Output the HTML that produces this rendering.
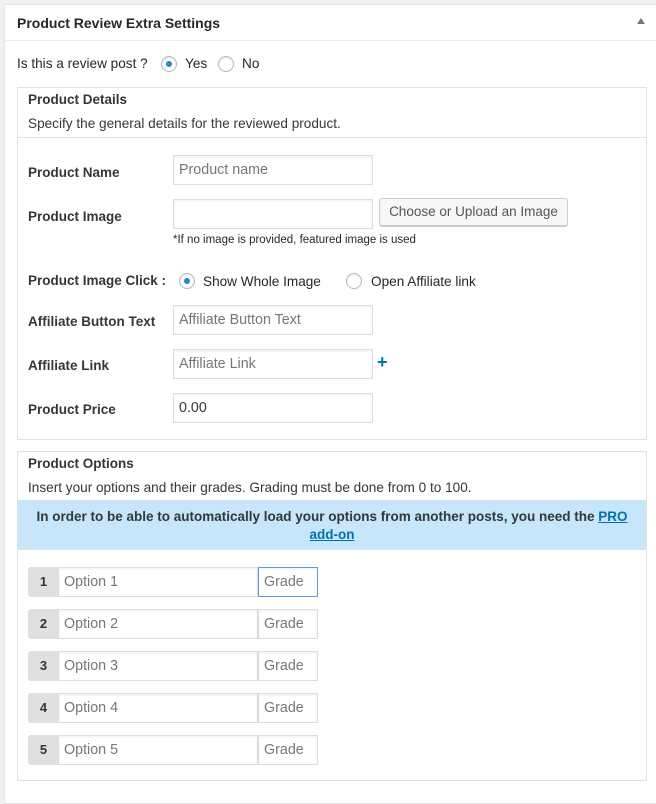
<!DOCTYPE html>
<html><head><meta charset="utf-8"><style>
*{box-sizing:border-box;margin:0;padding:0}
body{width:656px;height:788px;background:#f1f1f1;font-family:"Liberation Sans",sans-serif;color:#23282d;position:relative;overflow:hidden;font-size:13.6px}
.a{position:absolute;white-space:nowrap}
.outer{position:absolute;left:4px;top:4px;width:660px;height:800px;background:#fff;border:1px solid #e5e5e5}
.box{position:absolute;left:17px;width:630px;border:1px solid #e1e1e1;background:#fff}
.lbl{position:absolute;left:28px;font-weight:bold;font-size:13.5px;color:#32373c}
.in{position:absolute;border:1px solid #ddd;box-shadow:inset 0 1px 2px rgba(0,0,0,.07);background:#fff;color:#72777c;font-size:14.3px;padding-left:5px;line-height:28px;height:30px}
.radio{position:absolute;width:16px;height:16px;border-radius:50%;border:1px solid #b4b9be;background:#fff;box-shadow:inset 0 1px 2px rgba(0,0,0,.1)}
.radio.on::after{content:"";position:absolute;left:4px;top:4px;width:6px;height:6px;border-radius:50%;background:#1e8cbe}
.num{position:absolute;left:28px;width:31px;height:30px;background:#e0e0e0;border-radius:3px 0 0 3px;font-weight:bold;font-size:13px;line-height:30px;text-align:center;color:#333}
</style></head><body>
<div class="outer"></div>
<div class="a" style="left:4px;top:40px;width:652px;height:1px;background:#eee"></div>
<div class="a" style="left:17px;top:14px;font-weight:bold;font-size:14px;line-height:18px">Product Review Extra Settings</div>
<div class="a" style="left:637px;top:18px;width:0;height:0;border-left:4px solid transparent;border-right:4px solid transparent;border-bottom:6px solid #72777c"></div>

<div class="a" style="left:17px;top:56px;line-height:16px">Is this a review post ?</div>
<div class="radio on" style="left:161px;top:56px"></div>
<div class="a" style="left:185px;top:56px;line-height:16px">Yes</div>
<div class="radio" style="left:218px;top:56px"></div>
<div class="a" style="left:242px;top:56px;line-height:16px">No</div>

<div class="box" style="top:87px;height:353px"></div>
<div class="a" style="left:17px;top:137px;width:630px;height:1px;background:#e1e1e1"></div>
<div class="a" style="left:28px;top:92px;font-weight:bold;font-size:13.5px;line-height:16px;color:#32373c">Product Details</div>
<div class="a" style="left:28px;top:116px;line-height:16px;color:#32373c">Specify the general details for the reviewed product.</div>

<div class="lbl" style="top:165px">Product Name</div>
<div class="in" style="left:173px;top:155px;width:200px">Product name</div>
<div class="lbl" style="top:209px">Product Image</div>
<div class="in" style="left:173px;top:199px;width:200px"></div>
<div class="a" style="left:379px;top:198px;width:189px;height:28px;border:1px solid #ccc;border-radius:3px;background:#f7f7f7;box-shadow:0 1px 0 #ccc;font-size:13.5px;line-height:26px;text-align:center;color:#555">Choose or Upload an Image</div>
<div class="a" style="left:173px;top:234px;font-size:11.5px;line-height:13px;color:#23282d">*If no image is provided, featured image is used</div>

<div class="lbl" style="top:273px">Product Image Click :</div>
<div class="radio on" style="left:179px;top:273px"></div>
<div class="a" style="left:203px;top:274px;line-height:16px">Show Whole Image</div>
<div class="radio" style="left:346px;top:273px"></div>
<div class="a" style="left:371px;top:274px;line-height:16px">Open Affiliate link</div>

<div class="lbl" style="top:314px">Affiliate Button Text</div>
<div class="in" style="left:173px;top:305px;width:200px">Affiliate Button Text</div>
<div class="lbl" style="top:358px">Affiliate Link</div>
<div class="in" style="left:173px;top:349px;width:200px">Affiliate Link</div>
<div class="a" style="left:377px;top:352px;font-weight:bold;font-size:18px;line-height:20px;color:#0073aa">+</div>
<div class="lbl" style="top:402px">Product Price</div>
<div class="in" style="left:173px;top:393px;width:200px;color:#32373c">0.00</div>

<div class="box" style="top:451px;height:330px"></div>
<div class="a" style="left:28px;top:456px;font-weight:bold;font-size:13.5px;line-height:16px;color:#32373c">Product Options</div>
<div class="a" style="left:28px;top:480px;line-height:16px;color:#32373c">Insert your options and their grades. Grading must be done from 0 to 100.</div>
<div class="a" style="left:18px;top:500px;width:628px;height:50px;background:#c7e5fb;border-bottom:1px solid #e1e1e1;text-align:center;font-weight:bold;font-size:13.5px;line-height:18px;padding-top:8px;color:#32373c;white-space:normal">In order to be able to automatically load your options from another posts, you need the <span style="color:#0073aa;text-decoration:underline">PRO</span><br><span style="color:#0073aa;text-decoration:underline">add-on</span></div>

<div class="num" style="top:567px">1</div><div class="in" style="left:58px;top:567px;width:200px">Option 1</div><div class="in" style="left:258px;top:567px;width:60px;border-color:#5b9dd9">Grade</div>
<div class="num" style="top:609px">2</div><div class="in" style="left:58px;top:609px;width:200px">Option 2</div><div class="in" style="left:258px;top:609px;width:60px">Grade</div>
<div class="num" style="top:651px">3</div><div class="in" style="left:58px;top:651px;width:200px">Option 3</div><div class="in" style="left:258px;top:651px;width:60px">Grade</div>
<div class="num" style="top:693px">4</div><div class="in" style="left:58px;top:693px;width:200px">Option 4</div><div class="in" style="left:258px;top:693px;width:60px">Grade</div>
<div class="num" style="top:735px">5</div><div class="in" style="left:58px;top:735px;width:200px">Option 5</div><div class="in" style="left:258px;top:735px;width:60px">Grade</div>
</body></html>
